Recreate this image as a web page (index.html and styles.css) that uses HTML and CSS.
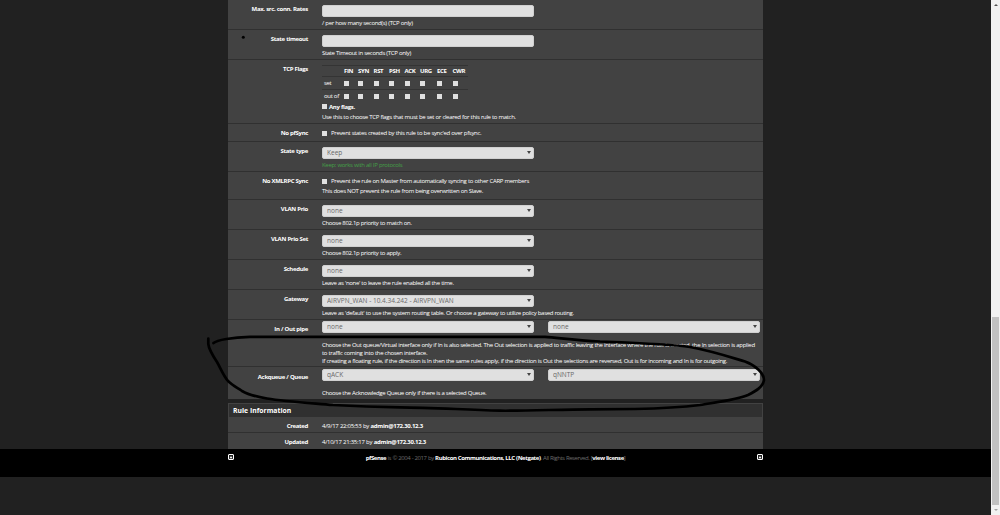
FILE: index.html
```html
<!DOCTYPE html>
<html lang="en">
<head>
    <meta charset="UTF-8">
    <title>Firewall: Rules: Edit</title>
    <link rel="stylesheet" href="styles.css">
</head>
<body>

<div class="page">
    <div class="container">
        <div class="panel">
            <div class="row">
                <label class="name">Max. src. conn. Rates</label>
                <div class="field">
                    <input type="text" class="control">
                    <span class="help">/ per how many second(s) (TCP only)</span>
                </div>
            </div>
            <div class="row">
                <label class="name">State timeout</label>
                <div class="field">
                    <input type="text" class="control">
                    <span class="help">State Timeout in seconds (TCP only)</span>
                </div>
            </div>
            <div class="row row-flags">
                <label class="name">TCP Flags</label>
                <div class="field">
                    <table class="flags">
                        <tr><th class="first"></th><th class="narrow">FIN</th><th>SYN</th><th>RST</th><th>PSH</th><th>ACK</th><th class="wide">URG</th><th>ECE</th><th>CWR</th></tr>
                        <tr><td class="first">set</td><td><input type="checkbox"></td><td><input type="checkbox"></td><td><input type="checkbox"></td><td><input type="checkbox"></td><td><input type="checkbox"></td><td><input type="checkbox"></td><td><input type="checkbox"></td><td><input type="checkbox"></td></tr>
                        <tr><td class="first">out of</td><td><input type="checkbox"></td><td><input type="checkbox"></td><td><input type="checkbox"></td><td><input type="checkbox"></td><td><input type="checkbox"></td><td><input type="checkbox"></td><td><input type="checkbox"></td><td><input type="checkbox"></td></tr>
                    </table>
                    <label class="any"><input type="checkbox"><b>Any flags.</b></label>
                    <span class="help">Use this to choose TCP flags that must be set or cleared for this rule to match.</span>
                </div>
            </div>
            <div class="row row-check">
                <label class="name">No pfSync</label>
                <div class="field">
                    <label class="check"><input type="checkbox"><span>Prevent states created by this rule to be sync'ed over pfsync.</span></label>
                </div>
            </div>
            <div class="row">
                <label class="name">State type</label>
                <div class="field">
                    <div class="select"><select class="control"><option>Keep</option></select></div>
                    <span class="help green">Keep: works with all IP protocols</span>
                </div>
            </div>
            <div class="row row-xmlrpc">
                <label class="name">No XMLRPC Sync</label>
                <div class="field">
                    <label class="check"><input type="checkbox"><span>Prevent the rule on Master from automatically syncing to other CARP members</span></label>
                    <span class="help">This does NOT prevent the rule from being overwritten on Slave.</span>
                </div>
            </div>
            <div class="row">
                <label class="name">VLAN Prio</label>
                <div class="field">
                    <div class="select"><select class="control"><option>none</option></select></div>
                    <span class="help">Choose 802.1p priority to match on.</span>
                </div>
            </div>
            <div class="row">
                <label class="name">VLAN Prio Set</label>
                <div class="field">
                    <div class="select"><select class="control"><option>none</option></select></div>
                    <span class="help">Choose 802.1p priority to apply.</span>
                </div>
            </div>
            <div class="row">
                <label class="name">Schedule</label>
                <div class="field">
                    <div class="select"><select class="control"><option>none</option></select></div>
                    <span class="help">Leave as 'none' to leave the rule enabled all the time.</span>
                </div>
            </div>
            <div class="row">
                <label class="name">Gateway</label>
                <div class="field">
                    <div class="select"><select class="control"><option>AIRVPN_WAN - 10.4.34.242 - AIRVPN_WAN</option></select></div>
                    <span class="help">Leave as 'default' to use the system routing table. Or choose a gateway to utilize policy based routing.</span>
                </div>
            </div>
            <div class="row row-pipe">
                <label class="name">In / Out pipe</label>
                <div class="field">
                    <div class="pair">
                        <div class="select"><select class="control"><option>none</option></select></div>
                        <div class="select"><select class="control"><option>none</option></select></div>
                    </div>
                    <span class="help">Choose the Out queue/Virtual interface only if In is also selected. The Out selection is applied to traffic leaving the interface where the rule is created, the In selection is applied<br>to traffic coming into the chosen interface.<br>If creating a floating rule, if the direction is In then the same rules apply, if the direction is Out the selections are reversed, Out is for incoming and In is for outgoing.</span>
                </div>
            </div>
            <div class="row row-queue">
                <label class="name">Ackqueue / Queue</label>
                <div class="field">
                    <div class="pair">
                        <div class="select"><select class="control"><option>qACK</option></select></div>
                        <div class="select"><select class="control"><option>qNNTP</option></select></div>
                    </div>
                    <span class="help">Choose the Acknowledge Queue only if there is a selected Queue.</span>
                </div>
            </div>
        </div>

        <div class="panel info">
            <h2 class="heading">Rule Information</h2>
            <div class="row row-info">
                <label class="name">Created</label>
                <div class="field">4/9/17 22:05:53 by <b>admin@172.30.12.3</b></div>
            </div>
            <div class="row row-info">
                <label class="name">Updated</label>
                <div class="field">4/10/17 21:35:17 by <b>admin@172.30.12.3</b></div>
            </div>
        </div>
    </div>

    <footer class="footer">
        <div class="footer-inner">
            <svg class="up" viewBox="0 0 6 6"><rect x=".5" y=".5" width="5" height="5" rx=".5"/><path d="M1.500 4.200 3 2l1.500 2.200z"/></svg>
            <p><b>pfSense</b> is © 2004 - 2017 by <b>Rubicon Communications, LLC (Netgate)</b>. All Rights Reserved. [<b>view license</b>]</p>
            <svg class="up" viewBox="0 0 6 6"><rect x=".5" y=".5" width="5" height="5" rx=".5"/><path d="M1.500 4.200 3 2l1.500 2.200z"/></svg>
        </div>
    </footer>
</div>

<div class="scrollbar">
    <span class="arrow arrow-up"></span>
    <span class="thumb"></span>
    <span class="arrow arrow-down"></span>
</div>

<!-- pen marks drawn over the form -->
<svg class="marks" viewBox="0 0 1000 515">
    <path d="M213.500 343C217 340 232 337.300 250 336.800H545C560 338 575 340 600 341.500C640 343 670 344 690 347C712 351 730 357 745 361.500C755 365 764 373 764 380C763 387 756 391 748 395C736 400 718 402 700 405C680 407.500 660 408.500 635 409L590 409.300C560 409.300 530 411 500 410.700C460 409.500 430 407.500 400 407.300C370 407 350 406 333 405C310 403 285 401.500 267 398.500C255 396.500 248 394.500 242 391C236 387 232 385 228 381C223 375 220 367 217 362C213 356 209 350 208.300 344V338.500"/>
    <circle cx="243.300" cy="37.300" r="1.500"/>
</svg>

</body>
</html>
```

FILE: styles.css
```css
* {
    box-sizing: border-box;
}
body {
    margin: 0;
    width: 1000px;
    height: 515px;
    display: flex;
    overflow: hidden;
    background-color: #212121;
    color: #fff;
    font-family: "Open Sans", "Noto Sans", sans-serif;
    font-size: 6px;
    line-height: 8px;
    letter-spacing: -0.330px;
    word-spacing: 0.200px;
}
.page {
    flex: 1;
}
.container {
    width: 535px;
    height: 449px;
    margin-left: 228px;
}
.panel {
    background-color: #424242;
}
.row {
    display: flex;
    height: 30px;
    padding-top: 5px;
    border-bottom: 1px solid #303030;
}
.panel .row:last-child {
    border-bottom: none;
}
.name {
    flex: none;
    width: 80px;
    margin-right: 14px;
    text-align: right;
    font-weight: bold;
    white-space: nowrap;
}
.field {
    flex: 1;
    min-width: 0;
    white-space: nowrap;
}
.control {
    display: block;
    width: 212px;
    height: 12px;
    margin: 0;
    padding: 0 4px;
    border: 1px solid #d0d0d0;
    border-radius: 2px;
    background-color: #e0e0e0;
    color: #6a6a6a;
    font-family: inherit;
    font-size: 6.500px;
    line-height: 10px;
    letter-spacing: 0;
    word-spacing: 0;
    appearance: none;
}
.select {
    position: relative;
    width: 212px;
}
.select::after {
    content: "";
    position: absolute;
    right: 3.500px;
    top: 3.500px;
    border: 2px solid transparent;
    border-top: 3.500px solid #444;
    border-bottom: none;
}
.pair {
    display: flex;
    gap: 14px;
}
.help {
    display: block;
    margin-top: 2px;
}
.green {
    color: #43a047;
}
input[type="checkbox"] {
    display: block;
    width: 5px;
    height: 5px;
    margin: 0;
    background-color: #e0e0e0;
    appearance: none;
}
.row-flags {
    height: 64px;
}
.flags {
    width: 146px;
    border-collapse: collapse;
    table-layout: fixed;
}
.flags th, .flags td {
    height: 13px;
    padding: 0;
    border-top: 1px solid #343434;
    text-align: left;
}
.flags th {
    height: 11px;
}
.flags .first {
    width: 22px;
    padding-left: 2px;
}
.flags .narrow {
    width: 14px;
}
.flags .wide {
    width: 17px;
}
.any, .check {
    display: flex;
    align-items: center;
}
.any {
    gap: 2px;
}
.row-check {
    height: 18px;
}
.check {
    gap: 4px;
}
.row-xmlrpc {
    height: 28px;
}
.row-pipe {
    height: 47px;
    padding-top: 1px;
}
.row-pipe .name {
    padding-top: 4px;
}
.row-pipe .help {
    margin-top: 8px;
}
.row-queue {
    height: 32px;
    padding-top: 2px;
}
.row-queue .name {
    padding-top: 4px;
}
.row-queue .help {
    margin-top: 8px;
}
.info {
    margin-top: 4px;
}
.heading {
    height: 14px;
    margin: 0;
    padding: 0 4px;
    border: 1px solid #424242;
    border-bottom: none;
    background-color: #303030;
    font-size: 6.800px;
    line-height: 14px;
    letter-spacing: 0;
}
.row-info {
    height: 16px;
    padding-top: 5px;
}
.row-info .field {
    letter-spacing: -0.280px;
}
.footer {
    height: 28px;
    background-color: #000;
    color: #6c6c6c;
    letter-spacing: -0.420px;
}
.footer b {
    color: #fff;
}
.footer-inner {
    display: flex;
    justify-content: space-between;
    width: 535px;
    margin-left: 228px;
    padding-top: 5px;
}
.footer p {
    margin: 0;
    white-space: nowrap;
}
.up {
    width: 6px;
    height: 6px;
    fill: #fff;
}
.up rect {
    fill: #222;
    stroke: #fff;
}
.scrollbar {
    display: flex;
    flex-direction: column;
    align-items: center;
    width: 9px;
    padding: 4px 0;
    background-color: #f1f1f1;
}
.thumb {
    width: 7px;
    height: 188px;
    margin-top: auto;
    margin-bottom: 4px;
    background-color: #c1c1c1;
}
.arrow {
    border: 2px solid transparent;
}
.arrow-up {
    border-top: none;
    border-bottom-color: #505050;
}
.arrow-down {
    border-bottom: none;
    border-top-color: #a3a3a3;
}
.marks {
    position: absolute;
    left: 0;
    top: 0;
    width: 1000px;
    height: 515px;
    pointer-events: none;
}
.marks path {
    fill: none;
    stroke: #000;
    stroke-width: 2.700px;
    stroke-linecap: round;
    stroke-linejoin: round;
}
```
